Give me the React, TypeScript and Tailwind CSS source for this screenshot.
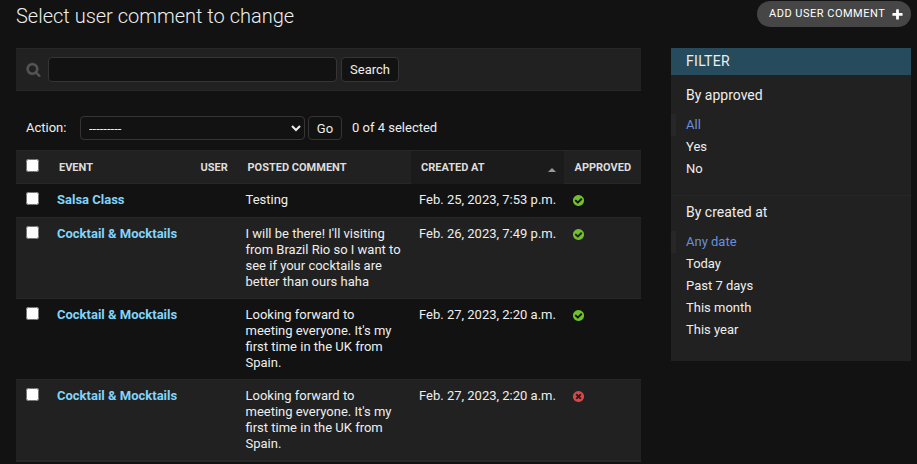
import React from "react";

const DISC =
  "m252 162q0 209-103 385.5t-279.5 279.5-385.5 103-385.5-103-279.5-279.5-103-385.5 103-385.5 279.5-279.5 385.5-103 385.5 103 279.5 279.5 103 385.5z";

function YesIcon() {
  return (
    <svg viewBox="0 0 1792 1792" className="block size-[13px] fill-[#70bf2b]" role="img" aria-label="True">
      <path d={"M1412 734q0-28-18-46l-91-90q-19-19-45-19t-45 19l-408 407-226-226q-19-19-45-19t-45 19l-91 90q-18 18-18 46 0 27 18 45l362 362q19 19 45 19 27 0 46-19l543-543q18-18 18-45z" + DISC} />
    </svg>
  );
}

function NoIcon() {
  return (
    <svg viewBox="0 0 1792 1792" className="block size-[13px] fill-[#dd4646]" role="img" aria-label="False">
      <path d="M1277 1122q0-26-19-45l-181-181 181-181q19-19 19-45 0-27-19-46l-90-90q-19-18-46-18-26 0-45 18l-181 181-181-181q-19-18-45-18-27 0-46 18l-90 90q-19 19-19 46 0 26 19 45l181 181-181 181q-19 19-19 45 0 27 19 46l90 90q19 19 46 19 26 0 45-19l181-181 181 181q19 19 45 19 27 0 46-19l90-90q19-19 19-46zm387-226q0 209-103 385.5t-279.5 279.5-385.5 103-385.5-103-279.5-279.5-103-385.5 103-385.5 279.5-279.5 385.5-103 385.5 103 279.5 279.5 103 385.5z" />
    </svg>
  );
}

function SearchIcon() {
  return (
    <svg viewBox="0 0 1792 1792" className="block size-[15px] fill-[#555555] stroke-[#555555] stroke-[50]">
      <path d="M1216 832q0-185-131.5-316.5t-316.5-131.5-316.5 131.5-131.5 316.5 131.5 316.5 316.5 131.5 316.5-131.5 131.5-316.5zm512 832q0 52-38 90t-90 38q-54 0-90-38l-343-342q-179 124-399 124-143 0-273.5-55.5t-225-150-150-225-55.5-273.5 55.5-273.5 150-225 225-150 273.5-55.5 273.5 55.5 225 150 150 225 55.5 273.5q0 220-124 399l343 343q37 37 37 90z" />
    </svg>
  );
}

function PlusIcon() {
  return (
    <svg viewBox="0 0 1792 1792" className="block size-[13px] fill-white">
      <path d="M1600 796v192q0 40-28 68t-68 28h-416v416q0 40-28 68t-68 28h-192q-40 0-68-28t-28-68v-416h-416q-40 0-68-28t-28-68v-192q0-40 28-68t68-28h416v-416q0-40 28-68t68-28h192q40 0 68 28t28 68v416h416q40 0 68 28t28 68z" />
    </svg>
  );
}

const GRID = "grid grid-cols-[31px_143.5px_45px_175.5px_153px_77px]";

const rows = [
  { event: "Salsa Class", comment: ["Testing"], created: "Feb. 25, 2023, 7:53 p.m.", approved: true },
  {
    event: "Cocktail & Mocktails",
    comment: ["I will be there! I'll visiting", "from Brazil Rio so I want to", "see if your cocktails are", "better than ours haha"],
    created: "Feb. 26, 2023, 7:49 p.m.",
    approved: true,
  },
  {
    event: "Cocktail & Mocktails",
    comment: ["Looking forward to", "meeting everyone. It's my", "first time in the UK from", "Spain."],
    created: "Feb. 27, 2023, 2:20 a.m.",
    approved: true,
  },
  {
    event: "Cocktail & Mocktails",
    comment: ["Looking forward to", "meeting everyone. It's my", "first time in the UK from", "Spain."],
    created: "Feb. 27, 2023, 2:20 a.m.",
    approved: false,
  },
];

function Filter({ title, items }: { title: string; items: string[] }) {
  return (
    <section>
      <h3 className="pl-[15px] text-sm leading-4">{title}</h3>
      <ul className="mt-[11px]">
        {items.map((item, i) => (
          <li
            key={item}
            className={
              i === 0
                ? "h-[22px] border-l-[5px] border-[#272727] pl-[10px] leading-[22px] text-[#6a90d9]"
                : "h-[22px] pl-[15px] leading-[22px]"
            }
          >
            {item}
          </li>
        ))}
      </ul>
    </section>
  );
}

export default function App() {
  return (
    <div className="h-[464px] overflow-hidden bg-[#121212] pr-[6px] pl-4 font-[Roboto,sans-serif] text-[13px] text-[#eeeeee]">
      <header className="flex h-12 items-start justify-between">
        <h1 className="pt-1 text-xl leading-6 font-light">Select user comment to change</h1>
        <button className="mt-px flex h-[26px] w-[154px] items-center rounded-full bg-[#464646] pl-3 text-[11px] tracking-[0.5px] text-white">
          <span className="w-[122px] pb-px text-left leading-4 whitespace-nowrap">ADD USER COMMENT</span>
          <PlusIcon />
        </button>
      </header>

      <div className="flex items-start gap-[30px]">
        <main className="w-[625px]">
          <div className="flex h-[43px] items-center border-y border-[#272727] bg-[#212121] pl-[10px]">
            <SearchIcon />
            <input className="ml-[7px] h-[25px] w-[289px] rounded border border-[#353535] bg-[#121212]" />
            <button className="ml-1 h-[25px] w-[58px] rounded border border-[#353535] bg-[#121212]">Search</button>
          </div>

          <div className="mt-[25px] flex h-6 items-center pl-[10px]">
            <label className="w-[54px]">Action:</label>
            <select className="h-6 w-[225px] rounded border border-[#353535] bg-[#121212] px-1">
              <option>---------</option>
            </select>
            <button className="ml-[3px] h-6 w-[34px] rounded border border-[#353535] bg-[#121212] pt-px">Go</button>
            <span className="ml-[10px]">0 of 4 selected</span>
          </div>

          <div className="mt-[10px] border-y border-[#272727]">
            <div className={GRID + " h-[33px] border-b border-[#272727] bg-[#212121] text-[11px] leading-8 font-bold text-[#dddddd]"}>
              <span className="pt-2 pl-[10px]">
                <input type="checkbox" className="block size-[13px]" />
              </span>
              <span className="pt-px pl-3">EVENT</span>
              <span className="pt-px pl-[10px]">USER</span>
              <span className="pt-px pl-3">POSTED COMMENT</span>
              <span className="flex items-start justify-between bg-[#1b1b1b] pr-2 pl-[10px]">
                <span className="pt-px">CREATED AT</span>
                <svg viewBox="0 0 8 4" className="mt-[17px] h-1 w-2 fill-[#999999]">
                  <path d="M4 0 8 4H0z" />
                </svg>
              </span>
              <span className="pt-px pl-[10.5px]">APPROVED</span>
            </div>
            {rows.map((row, i) => (
              <div
                key={i}
                className={
                  GRID +
                  " border-b border-[#272727] py-2 leading-4 " +
                  (i === 0 ? "h-[34px]" : "h-[81px]") +
                  (i % 2 ? " bg-[#212121]" : " bg-[#121212]")
                }
              >
                <span className="pl-[10px]">
                  <input type="checkbox" className="block size-[13px]" />
                </span>
                <a className="pl-[10px] font-bold text-[#81d4fa]">{row.event}</a>
                <span />
                <span className="pl-[10px]">
                  {row.comment.map((line) => (
                    <span key={line} className="block whitespace-nowrap">
                      {line}
                    </span>
                  ))}
                </span>
                <span className="pl-2 whitespace-nowrap">{row.created}</span>
                <span className="pt-[2px] pl-2">{row.approved ? <YesIcon /> : <NoIcon />}</span>
              </div>
            ))}
          </div>
        </main>

        <aside className="h-[313px] w-[240px] bg-[#212121]">
          <h2 className="h-[27px] bg-[#264b5d] pl-[15px] text-sm leading-[27px] tracking-[0.3px]">FILTER</h2>
          <div className="h-[121px] border-b border-[#272727] pt-3">
            <Filter title="By approved" items={["All", "Yes", "No"]} />
          </div>
          <div className="pt-2">
            <Filter title="By created at" items={["Any date", "Today", "Past 7 days", "This month", "This year"]} />
          </div>
        </aside>
      </div>
    </div>
  );
}
